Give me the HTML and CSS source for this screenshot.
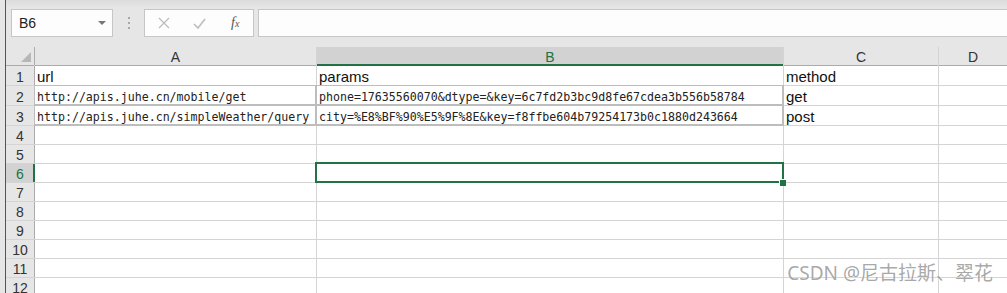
FILE: index.html
```html
<!DOCTYPE html>
<html lang="en">
<head>
    <meta charset="UTF-8">
    <meta name="viewport" content="width=device-width, initial-scale=1.0">
    <title>Sheet1 - Excel</title>
    <link rel="stylesheet" href="styles.css">
</head>
<body>
    <div class="excel">
        <div class="formula-bar">
            <div class="name-box">
                <span>B6</span>
                <span class="drop"></span>
            </div>
            <div class="grip"><i></i><i></i><i></i></div>
            <div class="fx-box">
                <svg class="fx-icon" width="12" height="12" viewBox="0 0 12 12">
                    <path d="M1 1 L11 11 M11 1 L1 11" stroke="#bdbdbd" stroke-width="1.3" fill="none"/>
                </svg>
                <svg class="fx-icon" width="13" height="11" viewBox="0 0 13 11">
                    <path d="M1 6 L5 10 L12 1" stroke="#bdbdbd" stroke-width="1.6" fill="none"/>
                </svg>
                <span class="fx">f<sub>x</sub></span>
            </div>
            <div class="formula-input"></div>
        </div>

        <div class="sheet">
            <div class="corner"><span class="tri"></span></div>
            <div class="col-head">A</div>
            <div class="col-head active">B</div>
            <div class="col-head">C</div>
            <div class="col-head">D</div>

            <div class="row-head">1</div>
            <div class="cell">url</div>
            <div class="cell">params</div>
            <div class="cell">method</div>
            <div class="cell"></div>

            <div class="row-head">2</div>
            <div class="cell code bd">http://apis.juhe.cn/mobile/get</div>
            <div class="cell code bd">phone=17635560070&amp;dtype=&amp;key=6c7fd2b3bc9d8fe67cdea3b556b58784</div>
            <div class="cell">get</div>
            <div class="cell"></div>

            <div class="row-head">3</div>
            <div class="cell code bd">http://apis.juhe.cn/simpleWeather/query</div>
            <div class="cell code bd">city=%E8%BF%90%E5%9F%8E&amp;key=f8ffbe604b79254173b0c1880d243664</div>
            <div class="cell">post</div>
            <div class="cell"></div>

            <div class="row-head">4</div>
            <div class="cell"></div><div class="cell"></div><div class="cell"></div><div class="cell"></div>

            <div class="row-head">5</div>
            <div class="cell"></div><div class="cell"></div><div class="cell"></div><div class="cell"></div>

            <div class="row-head active">6</div>
            <div class="cell"></div>
            <div class="cell selected"><span class="handle"></span></div>
            <div class="cell"></div>
            <div class="cell"></div>

            <div class="row-head">7</div>
            <div class="cell"></div><div class="cell"></div><div class="cell"></div><div class="cell"></div>

            <div class="row-head">8</div>
            <div class="cell"></div><div class="cell"></div><div class="cell"></div><div class="cell"></div>

            <div class="row-head">9</div>
            <div class="cell"></div><div class="cell"></div><div class="cell"></div><div class="cell"></div>

            <div class="row-head">10</div>
            <div class="cell"></div><div class="cell"></div><div class="cell"></div><div class="cell"></div>

            <div class="row-head">11</div>
            <div class="cell"></div><div class="cell"></div><div class="cell"></div><div class="cell"></div>

            <div class="row-head">12</div>
            <div class="cell"></div><div class="cell"></div><div class="cell"></div><div class="cell"></div>
        </div>

        <div class="watermark">CSDN @尼古拉斯、翠花</div>
    </div>
</body>
</html>
```

FILE: styles.css
```css
* {
    margin: 0;
    padding: 0;
    box-sizing: border-box;
}

body {
    font-family: 'Liberation Sans', Arial, sans-serif;
    background: #e6e6e6;
    padding-left: 5px;
    height: 293px;
    overflow: hidden;
}

.excel {
    position: relative;
    border-left: 1px solid #217346;
    height: 293px;
    overflow: hidden;
}

/* formula bar */

.formula-bar {
    height: 47px;
    display: flex;
    align-items: flex-start;
    padding: 9px 0 0 5px;
    background: linear-gradient(#dcdcdc 0px, #e6e6e6 8px);
}

.name-box {
    width: 102px;
    height: 28px;
    background: #fdfdfd;
    border: 1px solid #c6c6c6;
    display: flex;
    align-items: center;
    justify-content: space-between;
    padding: 0 6px 0 7px;
    font-size: 14px;
    color: #222;
}

.drop {
    width: 0;
    height: 0;
    border-left: 4px solid transparent;
    border-right: 4px solid transparent;
    border-top: 4px solid #777;
}

.grip {
    width: 31px;
    height: 28px;
    display: flex;
    flex-direction: column;
    align-items: center;
    justify-content: center;
    gap: 3px;
}

.grip i {
    width: 2px;
    height: 2px;
    background: #a8a8a8;
}

.fx-box {
    width: 110px;
    height: 28px;
    background: #fdfdfd;
    border: 1px solid #c6c6c6;
    display: flex;
    align-items: center;
    padding-left: 13px;
    gap: 23px;
}

.fx {
    font-family: 'Liberation Serif', 'Times New Roman', serif;
    font-style: italic;
    font-size: 14px;
    color: #555;
    margin-left: 2px;
}

.fx sub {
    font-size: 10px;
    vertical-align: 0;
}

.formula-input {
    flex: 1;
    height: 28px;
    margin-left: 4px;
    background: #fdfdfd;
    border-top: 1px solid #c6c6c6;
    border-bottom: 1px solid #c6c6c6;
    border-left: 1px solid #c6c6c6;
}

/* grid */

.sheet {
    display: grid;
    grid-template-columns: 28px 281px 466px 154px 1fr;
    grid-template-rows: 18px 19px 19px 19px 18px 18px 18px 18px 18px 18px 18px 18px 18px;
    gap: 1px;
    background: #d4d4d4;
}

.corner,
.col-head,
.row-head {
    background: #e6e6e6;
    color: #333;
    font-size: 14px;
    display: flex;
    align-items: center;
    justify-content: center;
}

.corner {
    position: relative;
    box-shadow: 0 1px #ababab, 1px 0 #ababab;
}

.tri {
    position: absolute;
    right: 3px;
    bottom: 3px;
    width: 0;
    height: 0;
    border-left: 10px solid transparent;
    border-bottom: 10px solid #b7b7b7;
}

.col-head {
    box-shadow: 0 1px #ababab;
    padding-top: 1px;
}

.col-head.active {
    background: #d2d2d2;
    color: #217346;
    box-shadow: inset 0 -1px #217346, 0 1px #217346;
}

.row-head {
    box-shadow: 1px 0 #ababab;
    padding-top: 2px;
}

.row-head.active {
    background: #d2d2d2;
    color: #217346;
    box-shadow: inset -1px 0 #217346, 1px 0 #217346;
}

.cell {
    background: #fff;
    font-size: 15px;
    color: #111;
    padding: 0 2px;
    display: flex;
    align-items: flex-end;
    line-height: 17px;
    white-space: nowrap;
}

.cell.code {
    font-family: 'DejaVu Sans Mono', Consolas, monospace;
    font-size: 11.6px;
    color: #222;
    line-height: 16px;
}

.cell.bd {
    box-shadow: 0 0 0 1px #bdbdbd, inset 0 -1px #bdbdbd, inset -1px 0 #bdbdbd;
}

.cell.selected {
    position: relative;
}

.cell.selected::after {
    content: "";
    position: absolute;
    top: -2px;
    left: -2px;
    right: -1px;
    bottom: -1px;
    border: 2px solid #217346;
}

.handle {
    position: absolute;
    right: -3px;
    bottom: -4px;
    width: 7px;
    height: 7px;
    background: #217346;
    border-top: 1px solid #fff;
    border-left: 1px solid #fff;
    z-index: 2;
}

.watermark {
    position: absolute;
    right: 14px;
    bottom: 7px;
    font-family: 'Noto Sans', 'Noto Sans CJK SC', sans-serif;
    font-size: 19px;
    color: rgba(130, 130, 130, 0.7);
    text-shadow: 0 0 2px #fff;
}
```
